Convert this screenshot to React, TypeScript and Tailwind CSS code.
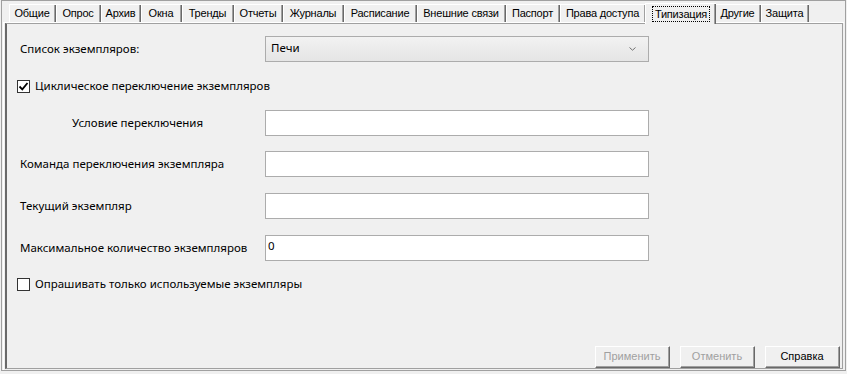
import React from 'react';

const tabs: [string, number][] = [
  ['Общие', 47],
  ['Опрос', 45],
  ['Архив', 40],
  ['Окна', 41],
  ['Тренды', 52],
  ['Отчеты', 49],
  ['Журналы', 61],
  ['Расписание', 73],
  ['Внешние связи', 89],
  ['Паспорт', 54],
  ['Права доступа', 86],
  ['Типизация', 71],
  ['Другие', 46],
  ['Защита', 48],
];

function Tab({ label, width, active }: { label: string; width: number; active?: boolean }) {
  if (active) {
    return (
      <div
        style={{ width }}
        className="relative z-10 -mx-[1px] -mb-[2px] flex h-[21px] items-start justify-center border-l border-t border-white bg-[#f0f0f0] pt-[2px]"
      >
        <div className="absolute right-0 top-0 h-full w-[2px] border-l border-l-[#a0a0a0] border-r border-r-[#696969]" />
        <span className="border border-dotted border-black px-[2px] leading-[14px]">{label}</span>
      </div>
    );
  }
  return (
    <div
      style={{ width }}
      className="relative flex h-[18px] items-center justify-center border-l border-t border-white"
    >
      <div className="absolute right-0 top-0 h-full w-[2px] border-l border-l-[#a0a0a0] border-r border-r-[#696969]" />
      <span className="pr-[2px]">{label}</span>
    </div>
  );
}

function Checkbox({ checked }: { checked?: boolean }) {
  return (
    <div className="flex h-[13px] w-[13px] items-center justify-center border border-[#333333] bg-white">
      {checked && (
        <svg width="11" height="11" viewBox="0 0 11 11">
          <path d="M1.5 5.5 L4.3 8.3 L9.5 2" fill="none" stroke="#000" strokeWidth="1.8" />
        </svg>
      )}
    </div>
  );
}

function Field({ label, value, indent }: { label: string; value?: string; indent?: boolean }) {
  return (
    <div className="flex items-center">
      <div className={`w-[245px] ${indent ? 'pl-[52px]' : ''}`}>{label}</div>
      <div className="h-[26px] w-[384px] border border-[#acacac] bg-white px-[2px] pt-[1px] leading-[18px]">
        {value}
      </div>
    </div>
  );
}

function Button({ label, disabled }: { label: string; disabled?: boolean }) {
  return (
    <div className="h-[22px] w-[75px] border-l border-t border-white border-r border-b border-r-[#696969] border-b-[#696969]">
      <div
        className={`flex h-full w-full items-center justify-center border-r border-b border-[#a0a0a0] ${
          disabled ? 'text-[#a0a0a0]' : 'text-black'
        }`}
      >
        {label}
      </div>
    </div>
  );
}

export default function App() {
  return (
    <div className="h-[374px] w-[847px] bg-[#f0f0f0] text-black">
      <div className="ml-px flex h-[371px] w-[845px] flex-col border border-[#a0a0a0]">
        {/* tab strip */}
        <div
          className="flex h-[21px] items-end pl-[7px] text-[11px] tracking-[-0.2px] text-black"
          style={{ fontFamily: '"Liberation Sans", Arial, sans-serif' }}
        >
          {tabs.map(([label, w]) => (
            <Tab key={label} label={label} width={w} active={label === 'Типизация'} />
          ))}
        </div>

        {/* page */}
        <div className="mx-px flex flex-1 flex-col border-l border-t border-white">
          <div className="ml-px mr-[1px] mb-[1px] flex flex-1 flex-col border-l-2 border-t border-l-[#696969] border-t-[#a0a0a0] border-r border-b border-r-[#a0a0a0] border-b-[#a0a0a0]">
            <div
              className="flex flex-1 flex-col pl-[13px] pt-[12px] text-[11.5px]"
              style={{ fontFamily: '"Noto Sans", "Open Sans", sans-serif' }}
            >
              <div className="flex items-center">
                <div className="w-[245px]">Список экземпляров:</div>
                <div className="flex h-[26px] w-[384px] items-center justify-between border border-[#acacac] bg-gradient-to-b from-[#f2f2f2] to-[#e5e5e5] pl-[5px] pr-[12px]">
                  <span className="-mt-[3px]">Печи</span>
                  <svg width="7" height="4" viewBox="0 0 7 4">
                    <path d="M0.5 0.5 L3.5 3.2 L6.5 0.5" fill="none" stroke="#707070" strokeWidth="1" />
                  </svg>
                </div>
              </div>

              <div className="-ml-[3px] mt-[16px] flex h-[16px] items-center gap-[5px]">
                <Checkbox checked />
                <span>Циклическое переключение экземпляров</span>
              </div>

              <div className="mt-[16px]">
                <Field label="Условие переключения" indent />
              </div>
              <div className="mt-[15px]">
                <Field label="Команда переключения экземпляра" />
              </div>
              <div className="mt-[16px]">
                <Field label="Текущий экземпляр" />
              </div>
              <div className="mt-[16px]">
                <Field label="Максимальное количество экземпляров" value="0" />
              </div>

              <div className="-ml-[3px] mt-[15px] flex h-[16px] items-center gap-[5px]">
                <Checkbox />
                <span>Опрашивать только используемые экземпляры</span>
              </div>

              <div className="flex-1" />

              <div
                className="mr-[2px] flex justify-end gap-[10px] text-[11px]"
                style={{ fontFamily: '"Liberation Sans", Arial, sans-serif' }}
              >
                <Button label="Применить" disabled />
                <Button label="Отменить" disabled />
                <Button label="Справка" />
              </div>
            </div>
          </div>
        </div>
      </div>
    </div>
  );
}
